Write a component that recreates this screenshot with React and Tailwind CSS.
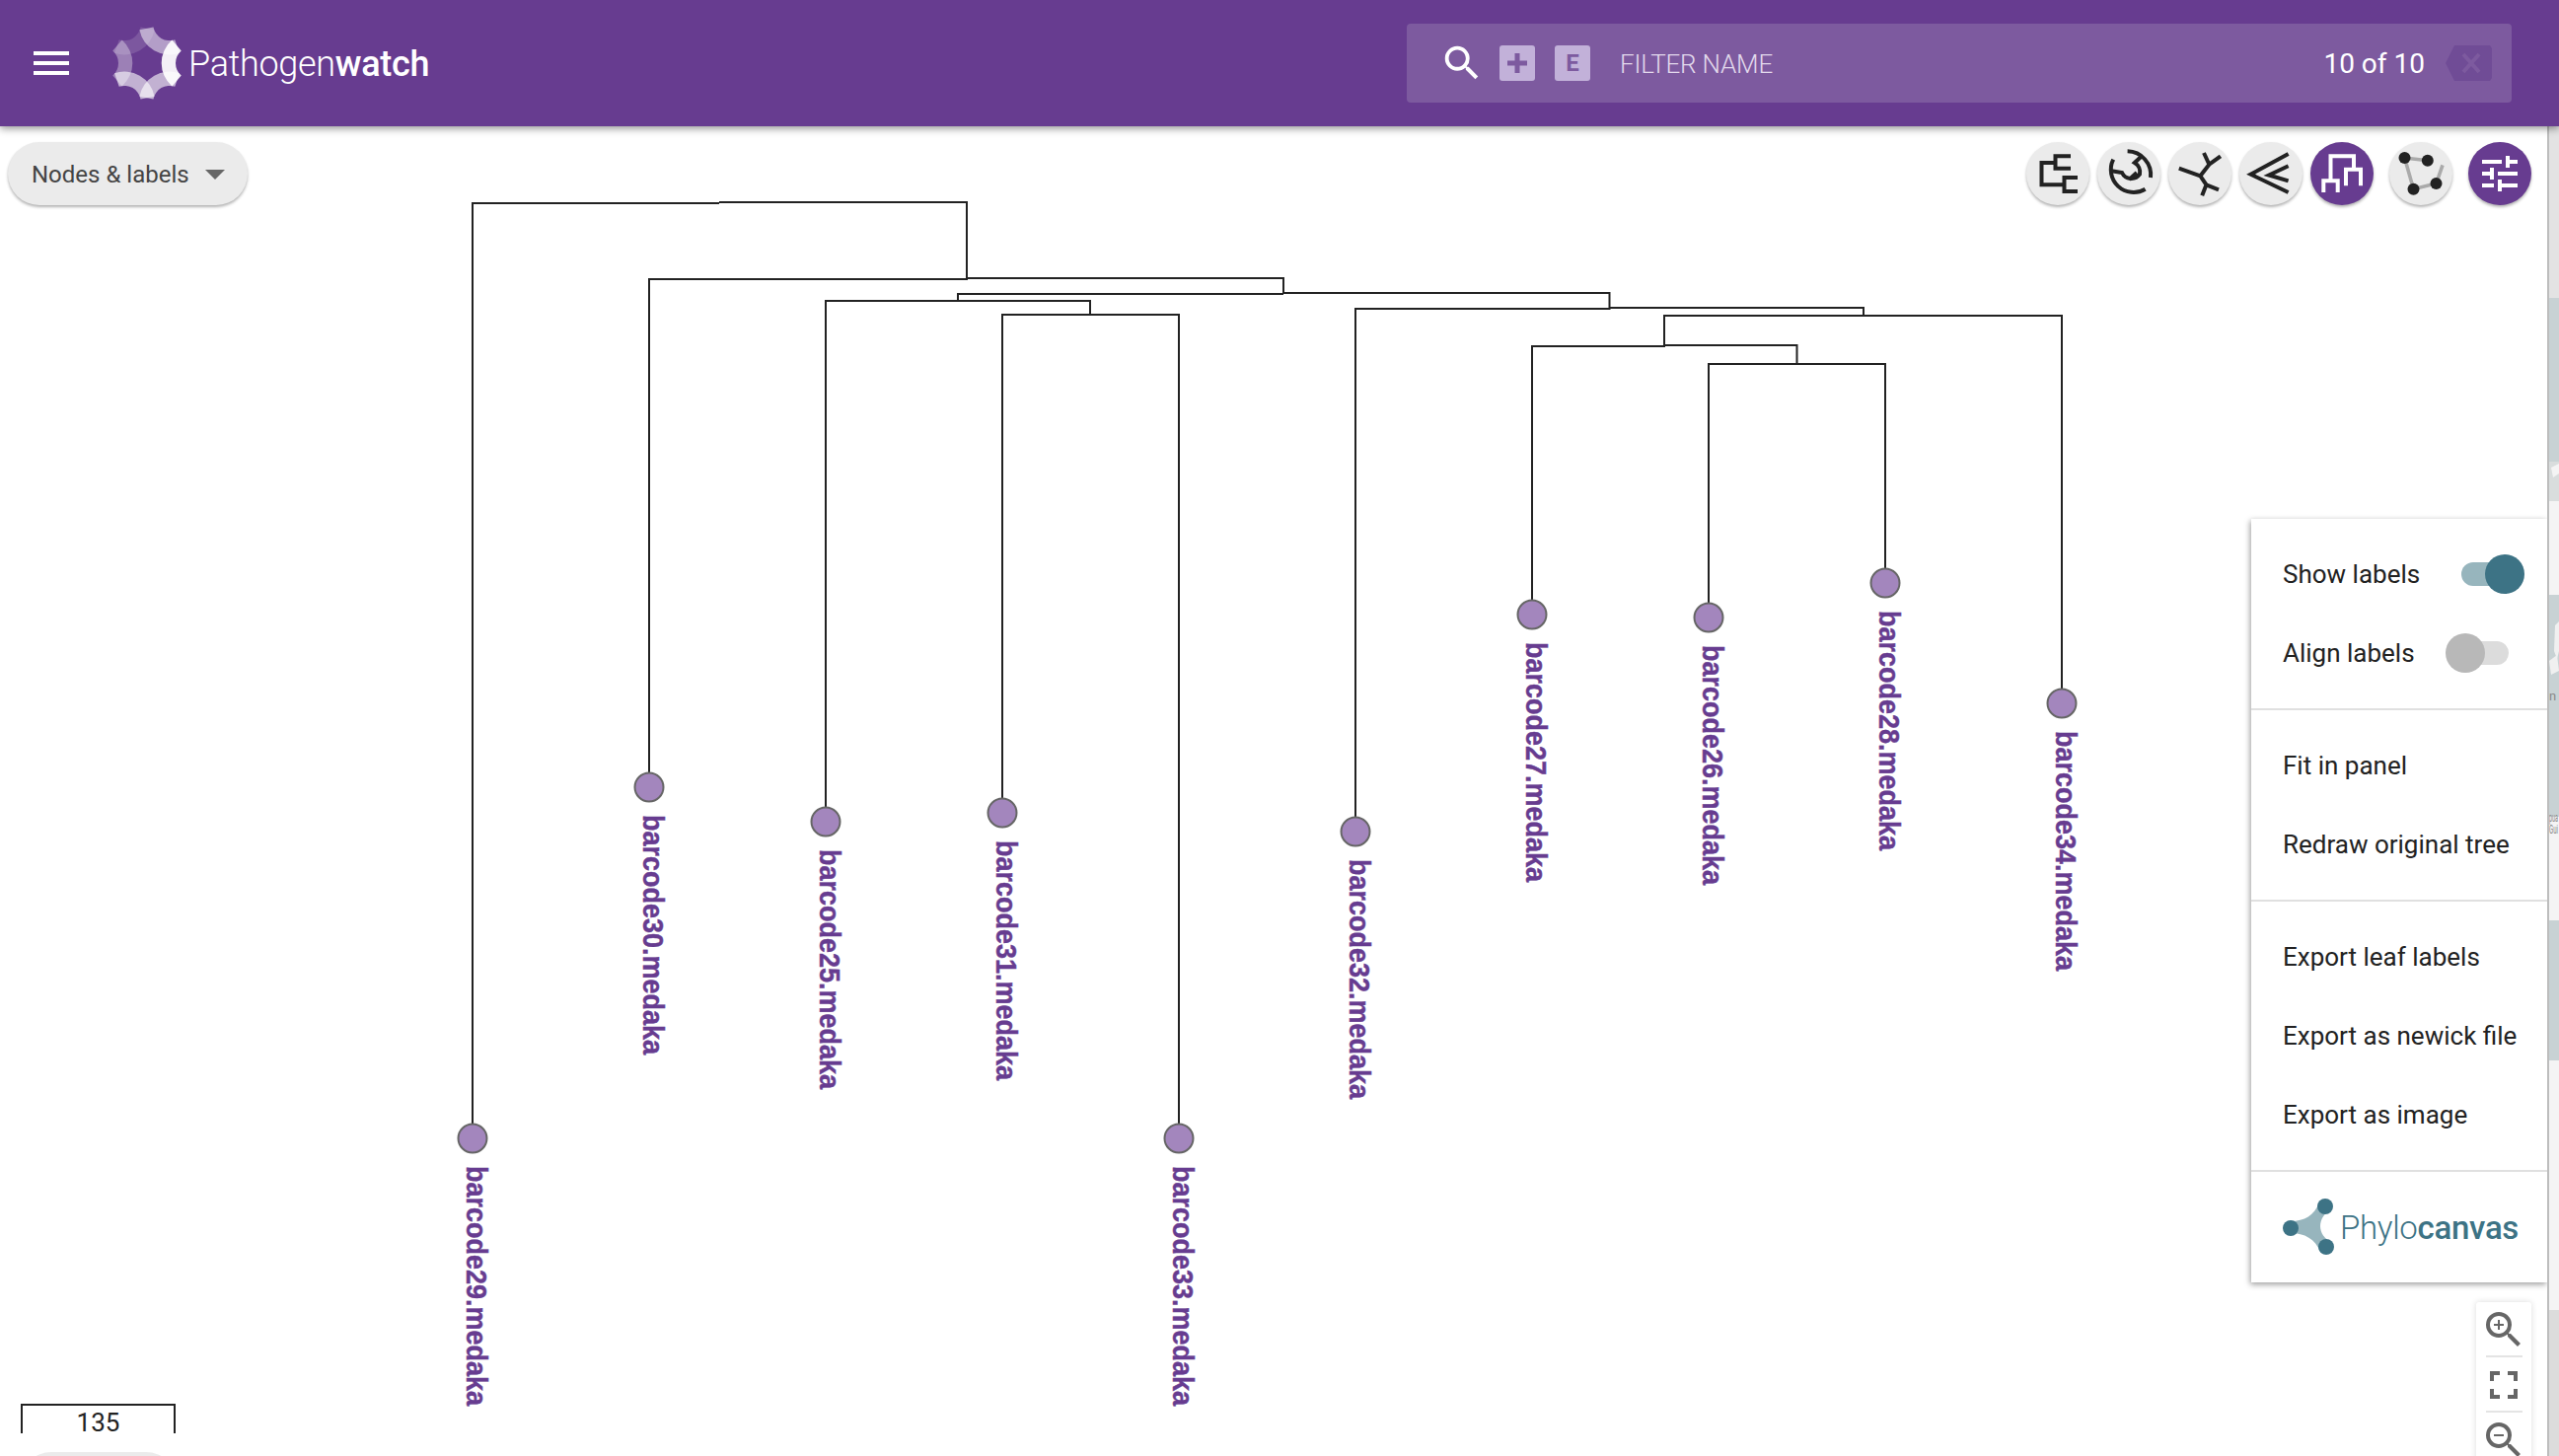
import { MdMenu, MdSearch, MdTune, MdZoomIn, MdZoomOut, MdFullscreen } from 'react-icons/md'

const branches = [
  '479,1154 479,206 729,206',
  '729,205 980,205 980,283 658,283 658,798',
  '980,282 1301,282 1301,298',
  '1301,298 971,298 971,305 837,305 837,833',
  '971,305 1105,305 1105,319 1016,319 1016,824',
  '1105,319 1195,319 1195,1154',
  '1301,297 1631.5,297 1631.5,313 1374,313 1374,843',
  '1631.5,312 1889,312 1889,320 1687,320 1687,351 1553,351 1553,623',
  '1889,320 2090,320 2090,713',
  '1687,350 1821.5,350 1821.5,369 1732,369 1732,626',
  '1821.5,369 1911,369 1911,591',
]

const leaves = [
  { x: 479, y: 1154, name: 'barcode29.medaka' },
  { x: 658, y: 798, name: 'barcode30.medaka' },
  { x: 837, y: 833, name: 'barcode25.medaka' },
  { x: 1016, y: 824, name: 'barcode31.medaka' },
  { x: 1195, y: 1154, name: 'barcode33.medaka' },
  { x: 1374, y: 843, name: 'barcode32.medaka' },
  { x: 1553, y: 623, name: 'barcode27.medaka' },
  { x: 1732, y: 626, name: 'barcode26.medaka' },
  { x: 1911, y: 591, name: 'barcode28.medaka' },
  { x: 2090, y: 713, name: 'barcode34.medaka' },
]

// six overlapping ring pieces make the gear mark
function gearPiece(angle) {
  const rad = (angle * Math.PI) / 180
  const cx = 34 + 45.7 * Math.cos(rad)
  const cy = 35 - 45.7 * Math.sin(rad)
  const spread = (49 * Math.PI) / 180
  const dir = rad + Math.PI
  const pt = (r, a) => `${(cx + r * Math.cos(a)).toFixed(2)} ${(cy - r * Math.sin(a)).toFixed(2)}`
  const r1 = 16.7
  const r2 = 31
  return `M${pt(r1, dir - spread)} A${r1} ${r1} 0 0 0 ${pt(r1, dir + spread)} L${pt(r2, dir + spread)} A${r2} ${r2} 0 0 1 ${pt(r2, dir - spread)} Z`
}

const gear = [
  { angle: 0, o: 0.92 },
  { angle: 60, o: 0.5 },
  { angle: 120, o: 0.14 },
  { angle: 180, o: 0.35 },
  { angle: 240, o: 0.6 },
  { angle: 300, o: 0.6 },
]

function Logo() {
  return (
    <svg width="68" height="70" viewBox="0 0 68 70" className="ml-[39px] shrink-0 overflow-visible">
      {gear.map((g) => (
        <path key={g.angle} d={gearPiece(g.angle)} fill="white" fillOpacity={g.o} />
      ))}
    </svg>
  )
}

function TreeIcon({ children, color = '#222' }) {
  return (
    <svg width="64" height="64" viewBox="0 0 64 64" fill="none" stroke={color} strokeWidth="4">
      {children}
    </svg>
  )
}

function RoundButton({ active, children }) {
  return (
    <button className={`w-16 h-16 rounded-full flex items-center justify-center shadow-[0_2px_3px_rgba(0,0,0,0.3)] ${active ? 'bg-[#673c90]' : 'bg-[#ebebeb]'}`}>
      {children}
    </button>
  )
}

function Toggle({ on }) {
  return (
    <div className={`relative w-12 h-6 rounded-full ${on ? 'bg-[#97b5bd]' : 'bg-[#dcdcdc]'}`}>
      <div className={`absolute -top-2 w-10 h-10 rounded-full ${on ? 'left-6 bg-[#3d7385]' : '-left-4 bg-[#b8b8b8]'}`} />
    </div>
  )
}

function MenuRow({ children }) {
  return <div className="h-20 flex items-center justify-between pl-8 text-[26px] text-[#222]">{children}</div>
}

function MapStrip() {
  return (
    <svg width="12" height="1348" viewBox="2582 128 12 1348" className="shrink-0 block">
      <rect x="2582" y="128" width="12" height="1348" fill="#f4f4f4" />
      <rect x="2584" y="128" width="10" height="174" fill="#e3e3e3" />
      <rect x="2584" y="302" width="10" height="166" fill="#c8d2d4" />
      <rect x="2584" y="468" width="10" height="40" fill="#d9dddd" />
      <rect x="2584" y="603" width="10" height="225" fill="#c8d2d4" />
      <rect x="2584" y="933" width="10" height="142" fill="#c8d2d4" />
      <rect x="2584" y="1328" width="10" height="148" fill="#dcdcdc" />
      <polygon points="2590,634 2594,630 2594,660 2592,668 2589,660" fill="#f0f0f0" />
      <polygon points="2584,670 2592,664 2594,680 2586,684" fill="#f0f0f0" />
      <polygon points="2586,474 2594,470 2594,480 2588,484" fill="#f4f4f4" />
      <text x="2584" y="710" fontSize="13" fill="#888">n</text>
      <text x="2584" y="833" fontSize="12" fill="#888" textLength="9" lengthAdjust="spacingAndGlyphs">pua</text>
      <text x="2584" y="845" fontSize="12" fill="#888" textLength="9" lengthAdjust="spacingAndGlyphs">Gui</text>
      <rect x="2582" y="128" width="2" height="1348" fill="#bdbdbd" />
    </svg>
  )
}

export default function App() {
  return (
    <div className="w-full h-screen overflow-hidden flex flex-col bg-white font-['Roboto',sans-serif]">
      <header className="relative z-20 h-32 shrink-0 flex items-center bg-[#673c90] shadow-[0_2px_8px_rgba(0,0,0,0.45)]">
        <MdMenu size={48} color="white" className="ml-7 shrink-0" />
        <Logo />
        <div className="ml-[8px] mt-0.5 text-[36px] leading-none text-white font-light tracking-[-0.3px]">
          Pathogen<span className="font-medium">watch</span>
        </div>
        <div className="ml-auto mr-12 w-[1120px] h-20 rounded-[4px] bg-[#7d5a9f] flex items-center pl-[33px]">
          <MdSearch size={46} color="white" className="shrink-0" />
          <div className="ml-[15px] w-9 h-9 rounded-[3px] bg-[#c2b1d9] flex items-center justify-center">
            <svg width="22" height="22" viewBox="0 0 22 22" stroke="#7d5a9f" strokeWidth="5">
              <path d="M11 1V21M1 11H21" />
            </svg>
          </div>
          <div className="ml-5 w-9 h-9 rounded-[3px] bg-[#c2b1d9] flex items-center justify-center text-[24px] font-bold text-[#7d5a9f]">E</div>
          <div className="ml-[30px] mt-0.5 text-[26px] tracking-[-0.2px] font-light text-[#e2d9ec]">FILTER NAME</div>
          <div className="ml-auto mt-0.5 text-[28px] text-white">10 of 10</div>
          <svg width="47" height="36" viewBox="0 0 47 36" className="ml-[21px] mr-5">
            <polygon points="9,0 45,0 47,3 47,33 45,36 9,36 0,18" fill="#704c96" />
            <path d="M18 9L34 27M34 9L18 27" stroke="#7d5a9f" strokeWidth="4" />
          </svg>
        </div>
      </header>

      <div className="flex-1 min-h-0 flex">
        <main className="relative flex-1 overflow-hidden">
          <svg width="2582" height="1348" viewBox="0 128 2582 1348" className="block">
            {branches.map((b) => (
              <polyline key={b} points={b} fill="none" stroke="#222" strokeWidth="2" />
            ))}
            {leaves.map((l) => (
              <g key={l.name}>
                <circle cx={l.x} cy={l.y} r="14.5" fill="#a386bd" stroke="#666" strokeWidth="2" />
                <text
                  transform={`translate(${l.x - 6} ${l.y + 28}) rotate(90) scale(1 1.1)`}
                  fontSize="27"
                  fontWeight="700"
                  fontFamily="'Liberation Sans', sans-serif"
                  fill="#673c90"
                  stroke="#673c90"
                  strokeWidth="0.4"
                >
                  {l.name}
                </text>
              </g>
            ))}
          </svg>

          <button className="absolute left-2 top-4 w-[243px] h-16 rounded-full bg-[#ebebeb] shadow-[0_2px_3px_rgba(0,0,0,0.3)] flex items-center pl-[24px] pt-0.5 text-[24px] text-[#444]">
            Nodes &amp; labels
            <svg width="20" height="10" viewBox="0 0 20 10" className="ml-[16px]">
              <polygon points="0,0 20,0 10,10" fill="#666" />
            </svg>
          </button>

          <div className="absolute right-4 top-4 flex gap-4">
            <div className="flex gap-2">
              <RoundButton>
                <TreeIcon>
                  <path d="M45 14.3H29.5V26.7H45M29.5 21H15.5V43.3H38.5M52 36H38.5V50H52" />
                </TreeIcon>
              </RoundButton>
              <RoundButton>
                <TreeIcon>
                  <path d="M30.6 9.3A24 24 0 0 1 54 36" />
                  <path d="M16.2 17.7A23 23 0 0 0 48.6 47.7" />
                  <path d="M14.4 29.3L25 31A10.5 10.5 0 0 0 43 32.7A11 11 0 0 0 37.8 21L45 14.3" />
                  <path d="M32.4 38L40 31" />
                </TreeIcon>
              </RoundButton>
              <RoundButton>
                <TreeIcon>
                  <path d="M10.8 26.7L32.4 34.3L41.4 22.7L36 11M41.4 22.7L52.9 14.3M32.4 34.3L38.5 43.3L34.2 54.3M38.5 43.3L51 48.3" />
                </TreeIcon>
              </RoundButton>
              <RoundButton>
                <TreeIcon>
                  <path d="M49.6 12L11.5 32.7L49.6 51M49.6 24.3L30 33.5L49.6 39.3" />
                </TreeIcon>
              </RoundButton>
              <RoundButton active>
                <TreeIcon color="white">
                  <path d="M13.3 51V39.3H27.7V51M20.5 39.3V14.3H44V27.7M36 44.3V27.7H51V44.3" />
                </TreeIcon>
              </RoundButton>
            </div>
            <RoundButton>
              <svg width="64" height="64" viewBox="0 0 64 64">
                <path d="M15.5 16L38.8 18.7M15.5 16L24.5 47.7L47.5 42L54 23.3" fill="none" stroke="#aaa" strokeWidth="3.6" />
                <circle cx="15.5" cy="16" r="6" fill="#222" />
                <circle cx="38.8" cy="18.7" r="6" fill="#222" />
                <circle cx="24.5" cy="47.7" r="6" fill="#222" />
                <circle cx="47.5" cy="42" r="6" fill="#222" />
              </svg>
            </RoundButton>
            <RoundButton active>
              <MdTune size={48} color="white" />
            </RoundButton>
          </div>

          <div className="absolute right-0 top-[398px] w-[300px] bg-white shadow-[-1px_2px_6px_rgba(0,0,0,0.4)]">
            <div className="py-4">
              <MenuRow>Show labels<div className="mr-[39px]"><Toggle on /></div></MenuRow>
              <MenuRow>Align labels<div className="mr-[39px]"><Toggle /></div></MenuRow>
            </div>
            <div className="h-0.5 bg-[#e0e0e0]" />
            <div className="py-4">
              <MenuRow>Fit in panel</MenuRow>
              <MenuRow>Redraw original tree</MenuRow>
            </div>
            <div className="h-0.5 bg-[#e0e0e0]" />
            <div className="py-4">
              <MenuRow>Export leaf labels</MenuRow>
              <MenuRow>Export as newick file</MenuRow>
              <MenuRow>Export as image</MenuRow>
            </div>
            <div className="h-0.5 bg-[#e0e0e0]" />
            <div className="h-28 flex items-center pl-8">
              <svg width="58" height="60" viewBox="0 0 58 60" className="shrink-0">
                <path d="M8 24C22 24 32 18 37 5L50 11C34 20 34 38 50 46L38 55C33 42 22 36 8 36Z" fill="#97b5bd" />
                <circle cx="8" cy="31" r="8" fill="#3d7385" />
                <circle cx="43" cy="9" r="8" fill="#3d7385" />
                <circle cx="44" cy="50" r="8" fill="#3d7385" />
              </svg>
              <div className="text-[33px] leading-none text-[#3d7385] font-light tracking-[-0.3px]">
                Phylo<span className="font-medium">canvas</span>
              </div>
            </div>
          </div>

          <div className="absolute left-[2510px] top-[1192px] w-14 bg-white rounded-[3px] shadow-[0_0_6px_rgba(0,0,0,0.15)] flex flex-col items-center">
            <div className="h-14 flex items-center"><MdZoomIn size={48} color="#666" /></div>
            <div className="w-[37px] h-0.5 -mt-0.5 bg-[#e4e4e4]" />
            <div className="h-14 flex items-center"><MdFullscreen size={48} color="#666" /></div>
            <div className="w-[37px] h-0.5 -mt-0.5 bg-[#e4e4e4]" />
            <div className="h-14 flex items-center"><MdZoomOut size={48} color="#666" /></div>
          </div>

          <div className="absolute left-[21px] top-[1295px] w-[157px] h-[30px] border-t-2 border-x-2 border-[#222] text-[26px] leading-[34px] text-center text-[#222]">
            135
          </div>
          <div className="absolute left-5 top-[1344px] w-40 h-16 rounded-full bg-[#ebebeb]" />
        </main>
        <MapStrip />
      </div>
    </div>
  )
}
